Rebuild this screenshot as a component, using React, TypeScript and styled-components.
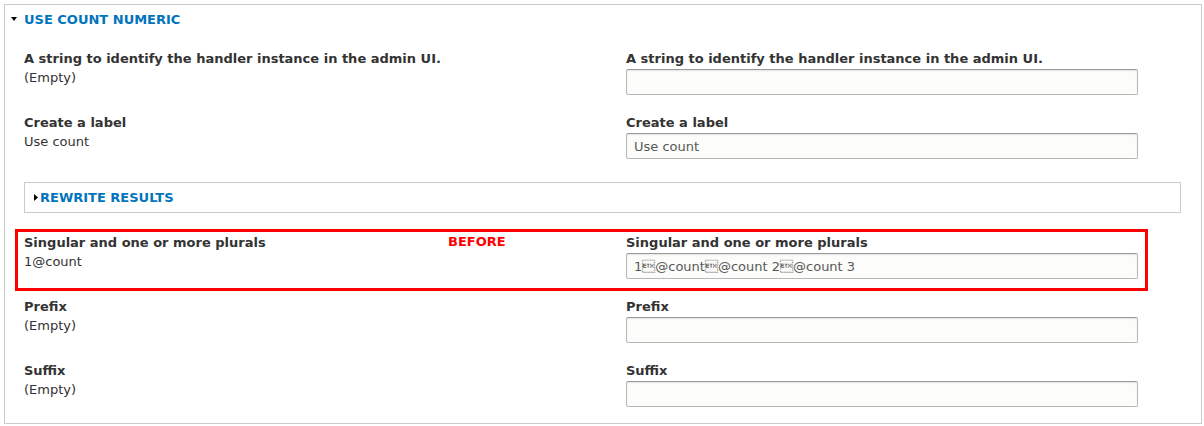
import styled, { createGlobalStyle } from "styled-components";

const GlobalStyle = createGlobalStyle`
  body {
    margin: 0;
    background: #fff;
    font-family: "DejaVu Sans", "Liberation Sans", sans-serif;
    color: #333;
  }
`;

const rows = [
  {
    label: "A string to identify the handler instance in the admin UI.",
    before: "(Empty)",
    after: "",
  },
  { label: "Create a label", before: "Use count", after: "Use count" },
];

const lowerRows = [
  { label: "Prefix", before: "(Empty)", after: "" },
  { label: "Suffix", before: "(Empty)", after: "" },
];

const Caret = ({ open }: { open?: boolean }) =>
  open ? (
    <svg width="6" height="4" viewBox="0 0 6 4">
      <path d="M0 0h6L3 4z" fill="#000" />
    </svg>
  ) : (
    <svg width="4" height="7" viewBox="0 0 4 7">
      <path d="M0 0l4 3.5L0 7z" fill="#000" />
    </svg>
  );

const FieldRow = ({
  label,
  before,
  after,
  highlighted,
}: {
  label: string;
  before: string;
  after: string;
  highlighted?: boolean;
}) => (
  <Row $highlighted={highlighted}>
    <Cell>
      <Label>{label}</Label>
      <Value>{before}</Value>
      {highlighted && <Badge>BEFORE</Badge>}
    </Cell>
    <Cell>
      <Label>{label}</Label>
      <TextInput readOnly value={after} />
    </Cell>
  </Row>
);

const App = () => {
  return (
    <>
      <GlobalStyle />
      <Fieldset>
        <Legend>
          <Caret open />
          <span>Use count numeric</span>
        </Legend>
        <Body>
          {rows.map((r, i) => (
            <FieldRow key={i} {...r} />
          ))}
          <SubFieldset>
            <Caret />
            <span>Rewrite results</span>
          </SubFieldset>
          <FieldRow
            highlighted
            label="Singular and one or more plurals"
            before="1@count"
            after={"1\u0003@count\u0003@count 2\u0003@count 3"}
          />
          {lowerRows.map((r, i) => (
            <FieldRow key={i} {...r} />
          ))}
        </Body>
      </Fieldset>
    </>
  );
};

export default App;

const Fieldset = styled.div`
  box-sizing: border-box;
  width: 1198px;
  height: 420px;
  margin: 4px 0 0 4px;
  border: 1px solid #ccc;
`;

const Legend = styled.div`
  display: flex;
  align-items: center;
  gap: 7px;
  height: 18px;
  padding: 5px 0 0 6px;
  color: #0074bd;
  font-size: 13px;
  font-weight: bold;
  text-transform: uppercase;
`;

const Body = styled.div`
  display: flex;
  flex-direction: column;
  padding: 22px 17px 0 19px;
`;

const Row = styled.div<{ $highlighted?: boolean }>`
  position: relative;
  display: grid;
  grid-template-columns: 602px 512px;
  height: 64px;

  ${(p) =>
    p.$highlighted &&
    `
    &::after {
      content: "";
      position: absolute;
      left: -9px;
      top: -5px;
      width: 1127px;
      height: 56px;
      border: 3px solid #f00;
      pointer-events: none;
    }
  `}
`;

const Cell = styled.div`
  position: relative;
  display: flex;
  flex-direction: column;
`;

const Label = styled.div`
  height: 19px;
  line-height: 18px;
  font-size: 13px;
  font-weight: bold;
`;

const Value = styled.div`
  line-height: 18px;
  font-size: 13px;
`;

const Badge = styled.div`
  position: absolute;
  left: 424px;
  top: -1px;
  color: #f00;
  font-size: 13px;
  font-weight: bold;
  line-height: 18px;
`;

const TextInput = styled.input`
  box-sizing: border-box;
  width: 512px;
  height: 26px;
  margin: 0;
  padding: 0 7px;
  border: 1px solid #b8b8b8;
  border-top-color: #999;
  border-radius: 2px;
  background: #fcfcfa;
  box-shadow: inset 0 1px 2px rgba(0, 0, 0, 0.1);
  font-family: "DejaVu Sans", sans-serif;
  font-size: 13px;
  color: #595959;
  outline: none;
`;

const SubFieldset = styled.div`
  box-sizing: border-box;
  display: flex;
  align-items: center;
  gap: 2px;
  width: 1157px;
  height: 31px;
  margin: 4px 0 21px;
  padding: 0 0 0 9px;
  border: 1px solid #ccc;
  color: #0074bd;
  font-size: 13px;
  font-weight: bold;
  text-transform: uppercase;
`;
